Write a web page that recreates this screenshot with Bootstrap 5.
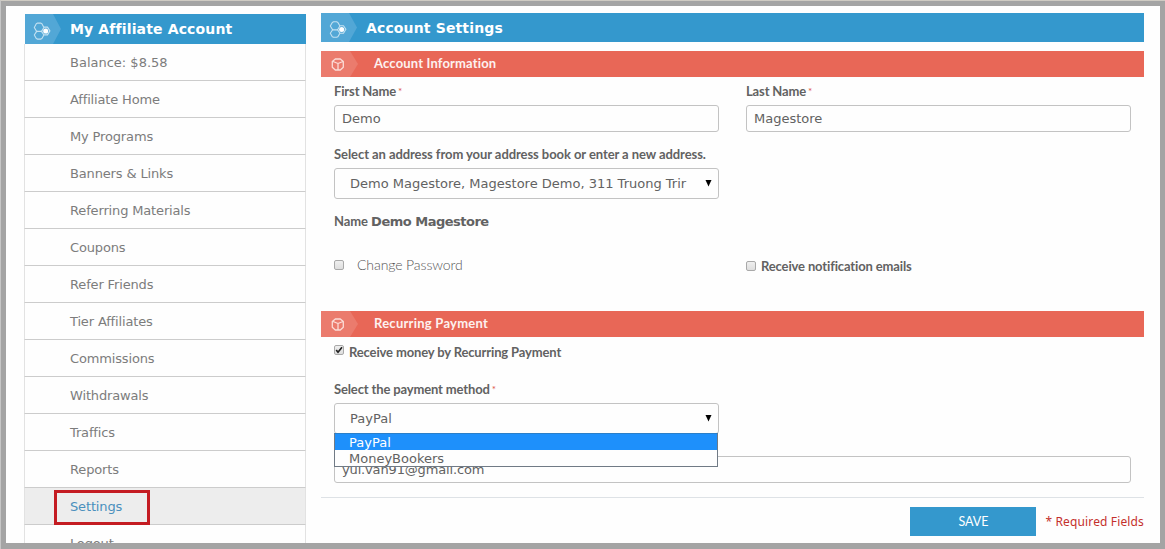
<!DOCTYPE html>
<html lang="en">
<head>
<meta charset="utf-8">
<title>Account Settings</title>
<link href="https://cdn.jsdelivr.net/npm/bootstrap@5.3.0/dist/css/bootstrap.min.css" rel="stylesheet">
<style>
body{height:549px;overflow:hidden;background:#a4a4a4;border-top:1px solid #cfcbc3;border-left:1px solid #c6c6c6;padding:5px 5px 6px 5px;font:13px/1.2 "DejaVu Sans",sans-serif;color:#626262}
.page-frame{background:#fefefe;height:537px;overflow:hidden;padding:8px 16px 0 18px}
.side-menu{width:282px;flex:none}
.side-menu .list-group-item{height:37px;padding:1px 0 0 45px;display:flex;align-items:center;border:0 solid #ccc;border-width:0 1px 1px;border-left-color:#e2e2e2;border-right-color:#e2e2e2;color:#7c7c7c;background:transparent;line-height:16px}
.side-menu a.list-group-item{letter-spacing:-.15px}
.side-menu .list-group-item.current{background:#ededed;color:#4a90bd}
.mark-box{position:absolute;left:29px;top:2px;width:96px;height:35px;border:3px solid #c41c22;z-index:2}
.bar{display:flex;align-items:center;color:#fff;font-weight:700}
.bar-blue{background:#3498cd;height:29px;font-size:14px;letter-spacing:.14px}
.bar-side{height:30px;margin-left:1px}
.bar-blue span{margin:1px 0 0 7px}
.bar-red{background:#e86757;height:26px;font:700 13px/1 Lato,sans-serif}
.bar-red span{margin:-2px 0 0 15px;color:#fdf1ef}
.bar svg{flex:none;height:100%;width:38px}
.raleish{font:700 13px/14px Lato,sans-serif;letter-spacing:-.07px;color:#626262}
.tight{letter-spacing:-.14px}
.thin{font:300 14px/16px Lato,sans-serif;color:#555;margin:-2px 0 0 13px;letter-spacing:-.1px}
.req{color:#dd5549;font-size:10px;vertical-align:1px;font-weight:400;margin-left:-1px}
.bold-name{font:700 13px/14px "DejaVu Sans",sans-serif;letter-spacing:-.5px}
.form-control,.picker{height:27px;border:1px solid #c3c3c3;border-radius:3px;padding:0 7px;font-size:13px;line-height:25px;color:#626262;background:#fefefe}
.picker{height:31px;line-height:29px;padding:0 6px 0 15px;display:flex;align-items:center;justify-content:space-between;white-space:nowrap}
.tick{width:10px;height:10px;border:1px solid #a9a9a9;border-radius:2px;background:linear-gradient(#efefef,#dedede);flex:none;display:block}
.half{width:385px}
.options{position:absolute;left:-1px;top:29px;width:384px;height:34px;border:1px solid #707a85;border-top-color:#2a7fc9;background:#fefefe;line-height:17px;z-index:3}
.options div{padding-left:14px;height:16px}
.options .chosen{background:#1e90fb;color:#fff}
.save{width:126px;height:29px;background:#3498cd;color:#fff;border:0;border-radius:0;padding:0;font:12.500px/29px Lato,sans-serif}
.note{font:12px/16px "Noto Sans",sans-serif;letter-spacing:.14px;color:#c4302c}
.form-body{padding:0 13px}
.h-a{height:28px;padding-top:7px}.h-b{height:36px;padding-top:15px}.h-c{height:112px;padding-top:15px}.h-d{height:66px;padding-top:8px}
.checks{margin-top:29px}
</style>
</head>
<body>
<svg width="0" height="0" class="position-absolute">
<symbol id="hive" viewBox="0 0 38 29" preserveAspectRatio="none"><path d="M0 0h28l8 14.500-8 14.500H0z" fill="#52a7d6"/><g fill="none" stroke="#c3e1f1" stroke-width="1.100" stroke-linejoin="round"><path d="M9.300 13l2-3.600 1.300-.6h3l1.300.6 2 3.600-2 3.300-1.300.6h-3l-1.300-.6zM9.300 20.300l2-3 1.300-.6h3l1.300.6 2 3-2 3.400-1.300.6h-3l-1.300-.6zM18.200 12.700h4.300l2.400 3.600-2.400 3.900h-4.300"/></g><circle cx="20.700" cy="16.400" r="2.500" fill="#fff"/></symbol>
<symbol id="cube" viewBox="0 0 38 26"><path d="M0 0h29l8 13-8 13H0z" fill="#eb7b6d"/><path d="M14.300 8h5l3 2.500v5.800l-3 2.700h-5l-3-2.700v-5.800zM12 10.500l5 2 5-2M17 12.500v6" fill="none" stroke="#fbdcd7" stroke-width="1.300" stroke-linejoin="round"/></symbol>
</svg>
<div class="page-frame d-flex align-items-start">
  <nav class="side-menu">
    <div class="bar bar-blue bar-side"><svg><use href="#hive"/></svg><span>My Affiliate Account</span></div>
    <div class="list-group list-group-flush rounded-0">
      <div class="list-group-item">Balance: $8.58</div>
      <a class="list-group-item">Affiliate Home</a>
      <a class="list-group-item">My Programs</a>
      <a class="list-group-item">Banners &amp; Links</a>
      <a class="list-group-item">Referring Materials</a>
      <a class="list-group-item">Coupons</a>
      <a class="list-group-item">Refer Friends</a>
      <a class="list-group-item">Tier Affiliates</a>
      <a class="list-group-item">Commissions</a>
      <a class="list-group-item">Withdrawals</a>
      <a class="list-group-item">Traffics</a>
      <a class="list-group-item">Reports</a>
      <a class="list-group-item current">Settings<span class="mark-box"></span></a>
      <a class="list-group-item">Logout</a>
    </div>
  </nav>
  <main class="flex-grow-1" style="margin:-1px 0 0 15px">
    <div class="bar bar-blue"><svg><use href="#hive"/></svg><span>Account Settings</span></div>
    <div class="bar bar-red" style="margin-top:9px"><svg><use href="#cube"/></svg><span style="letter-spacing:.16px">Account Information</span></div>
    <div class="form-body">
      <div class="d-flex justify-content-between">
        <div class="half"><div class="h-a raleish tight">First Name <span class="req">*</span></div><input class="form-control" value="Demo"></div>
        <div class="half"><div class="h-a raleish tight">Last Name <span class="req">*</span></div><input class="form-control" value="Magestore"></div>
      </div>
      <div class="h-b raleish">Select an address from your address book or enter a new address.</div>
      <div class="picker half"><span>Demo Magestore, Magestore Demo, 311 Truong Trir</span><svg width="7" height="7"><path d="M.5 0h6L3.500 6.500z" fill="#000"/></svg></div>
      <div class="h-c"><div class="raleish">Name <b class="bold-name">Demo Magestore</b></div>
        <div class="d-flex justify-content-between checks">
          <div class="half d-flex align-items-center"><i class="tick" style="margin-top:-2px"></i><span class="thin">Change Password</span></div>
          <div class="half d-flex align-items-center"><i class="tick"></i><span class="raleish tight" style="margin:1px 0 0 5px">Receive notification emails</span></div>
        </div>
      </div>
    </div>
    <div class="bar bar-red"><svg><use href="#cube"/></svg><span style="letter-spacing:.25px">Recurring Payment</span></div>
    <div class="form-body">
      <div class="d-flex h-d"><i class="tick"><svg class="d-block" width="8" height="8"><path d="M1.200 4L3 6.200 7 1.200" fill="none" stroke="#222" stroke-width="1.700"/></svg></i><span class="raleish tight" style="margin-left:5px">Receive money by Recurring Payment</span></div>
      <div><div class="raleish tight" style="margin-top:-21px;height:21px">Select the payment method <span class="req">*</span></div>
        <div class="picker half position-relative"><span>PayPal</span><svg width="7" height="7"><path d="M.5 0h6L3.500 6.500z" fill="#000"/></svg>
          <div class="options"><div class="chosen">PayPal</div><div>MoneyBookers</div></div></div>
      </div>
      <input class="form-control" style="margin-top:22px;letter-spacing:-.15px" value="yul.van91@gmail.com">
    </div>
    <div class="d-flex justify-content-end align-items-center border-top" style="margin-top:14px;padding-top:9px"><button class="btn save">SAVE</button><span class="note" style="margin-left:9px">* Required Fields</span></div>
  </main>
</div>
<script src="https://cdn.jsdelivr.net/npm/bootstrap@5.3.0/dist/js/bootstrap.bundle.min.js"></script>
</body>
</html>
